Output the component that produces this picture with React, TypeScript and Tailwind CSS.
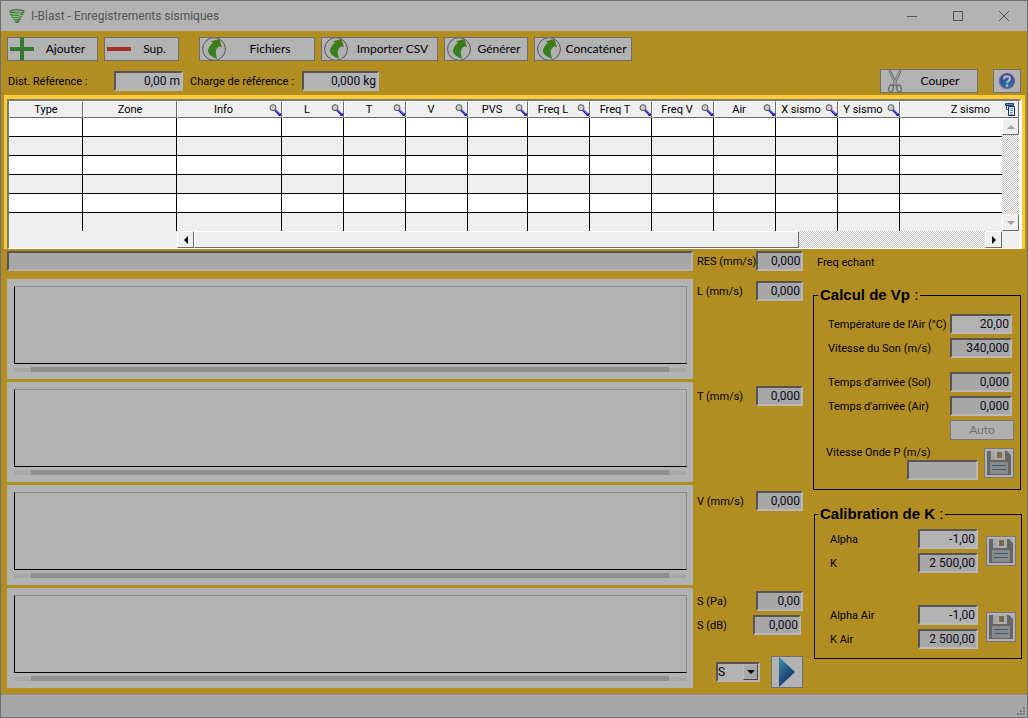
import { clsx } from "clsx";

const columns = [
    { name: "Type", width: "w-[74px]", search: false },
    { name: "Zone", width: "w-[94px]", search: false },
    { name: "Info", width: "w-[105px]", search: true },
    { name: "L", width: "w-[62px]", search: true },
    { name: "T", width: "w-[62px]", search: true },
    { name: "V", width: "w-[62px]", search: true },
    { name: "PVS", width: "w-[60px]", search: true },
    { name: "Freq L", width: "w-[62px]", search: true },
    { name: "Freq T", width: "w-[62px]", search: true },
    { name: "Freq V", width: "w-[62px]", search: true },
    { name: "Air", width: "w-[62px]", search: true },
    { name: "X sismo", width: "w-[62px]", search: true },
    { name: "Y sismo", width: "w-[62px]", search: true },
];

const bevel = "border border-t-white border-l-white border-r-[#6d6d6d] border-b-[#6d6d6d] bg-[#efefef]";
const dither = "bg-[conic-gradient(#c4c4c4_25%,#fff_0_50%,#c4c4c4_0_75%,#fff_0)] bg-[length:2px_2px]";

function TornadoIcon() {
    return (
        <svg viewBox="0 0 16 15" className="w-4 h-[15px]" fill="none" strokeLinecap="round">
            <path d="M1 2h14l-4 9-3 3-3-3z" fill="#8fa888" />
            <ellipse cx="8" cy="2.500" rx="7" ry="1.600" stroke="#2f6e24" strokeWidth="1.200" />
            <path d="M1.500 5.500Q8 8 14 5M3 8Q8 10 12.500 7.500M5 10.500Q8 12 11.500 10M6.500 13Q8 14 10 12.500" stroke="#2f7a26" strokeWidth="1.300" />
            <path d="M3 4.600Q8 6 12 4M4 7Q8 8.400 12 6.300M5.500 9.500Q8 10.500 11 8.700" stroke="#a9bda4" strokeWidth="0.800" />
        </svg>
    );
}

function PlusIcon() {
    return (
        <svg viewBox="0 0 24 22" className="w-6 h-[22px]">
            <path d="M10 0h4v9h10v4H14v9h-4v-9H0V9h10z" fill="#347a2b" />
        </svg>
    );
}

function MinusIcon() {
    return (
        <svg viewBox="0 0 24 22" className="w-6 h-[22px]">
            <path d="M0 9h24v4H0z" fill="#a03024" />
        </svg>
    );
}

function ArrowIcon() {
    return (
        <svg viewBox="0 0 24 22" className="w-6 h-[22px]">
            <defs>
                <linearGradient id="leaf" x1="0" y1="0" x2="0" y2="1">
                    <stop offset="0" stopColor="#447a10" />
                    <stop offset="1" stopColor="#318328" />
                </linearGradient>
            </defs>
            <circle cx="12" cy="11" r="11.400" fill="#b0b0b0" stroke="#555" strokeWidth="1" />
            <path d="M9 3.200L17.500 1 20 9.500 17.300 8.300C13.500 10.500 12.800 14.500 15.300 20.800 9.500 19 5.500 16 6 12 6.500 9 8.500 6.500 11 4.700z" fill="url(#leaf)" />
        </svg>
    );
}

function ScissorsIcon() {
    return (
        <svg viewBox="0 0 16 23" className="w-4 h-[23px]" fill="none">
            <path d="M2.500 0.500L10 16M13.500 0.500L6 16" stroke="#626262" strokeWidth="2.600" />
            <path d="M2.500 1l7 14M13 1L6.500 15" stroke="#a0a0a0" strokeWidth="1.300" />
            <ellipse cx="4" cy="18.500" rx="2.200" ry="3.500" stroke="#6a6a6a" strokeWidth="1.400" transform="rotate(15 4 18.500)" />
            <ellipse cx="12" cy="18.500" rx="2.200" ry="3.500" stroke="#6a6a6a" strokeWidth="1.400" transform="rotate(-15 12 18.500)" />
        </svg>
    );
}

function HelpIcon() {
    return (
        <svg viewBox="0 0 18 18" className="w-[18px] h-[18px]">
            <defs>
                <linearGradient id="ball" x1="0" y1="0" x2="0" y2="1">
                    <stop offset="0" stopColor="#2f4478" />
                    <stop offset="1" stopColor="#2478b4" />
                </linearGradient>
            </defs>
            <circle cx="9" cy="9" r="7.500" fill="url(#ball)" stroke="#83509a" strokeWidth="1.200" />
            <path d="M6 7.200C6 3.300 12.300 3.500 12 6.800 11.800 8.900 9.200 8.700 9 11.200" fill="none" stroke="#b4bccb" strokeWidth="2.200" />
            <circle cx="9" cy="13.600" r="1.300" fill="#b4bccb" />
        </svg>
    );
}

function SearchIcon() {
    return (
        <svg viewBox="0 0 12 12" className="w-3 h-3 shrink-0" fill="none">
            <path d="M6 6l5 5" stroke="#1010c0" strokeWidth="2.400" />
            <path d="M6.500 6l4.500 4.500" stroke="#b8c0ff" strokeWidth="0.700" />
            <circle cx="4" cy="3.700" r="3" fill="#c9c9c9" stroke="#555" />
            <path d="M11.500 9.500v2h-2" stroke="#111166" />
        </svg>
    );
}

function ColumnsIcon() {
    return (
        <svg viewBox="0 0 10 13" className="w-[10px] h-[13px] shrink-0">
            <path d="M.5.5h8v2h-8z" fill="#5f80c0" stroke="#23407e" />
            <path d="M1.500 3v3.500H3" fill="none" stroke="#23407e" />
            <path d="M3.500 3.500h6v9h-6z" fill="#e4ecfa" stroke="#1c2c6a" />
            <path d="M5 5.500h3M5 7.500h3M5 9.500h3M5 11.500h3" stroke="#6c88c8" />
        </svg>
    );
}

function SaveIcon() {
    return (
        <svg viewBox="0 0 24 24" className="w-6 h-6">
            <path d="M0 0h20l4 4v20H0z" fill="#666" />
            <path d="M4 0h14v9H4z" fill="#a6a6a6" />
            <path d="M8 0h8v9H8z" fill="#aeaeae" />
            <path d="M10 1h5v6h-5z" fill="#7c6a45" />
            <path d="M3 11h18v12H3z" fill="#8a8a8a" />
            <path d="M5 14.500h14M5 18.500h14" stroke="#355f80" />
        </svg>
    );
}

function ToolButton({ label, width, icon }: { label: string; width: string; icon: React.ReactNode }) {
    return (
        <button type="button" className={clsx("h-6 flex items-center border border-[#6f6f6f] bg-[#b2b2b2] pl-0.5 font-['Comic_Sans_MS',Lato,sans-serif] text-xs", width)}>
            {icon}
            <span className="flex-1 text-center whitespace-nowrap">{label}</span>
        </button>
    );
}

function NumberInput({ id, value, width, locked }: { id: string; value: string; width: string; locked?: boolean }) {
    return (
        <input
            id={id}
            type="text"
            defaultValue={value}
            readOnly={locked}
            className={clsx(
                "h-5 shrink-0 border-2 border-t-[#555] border-l-[#555] border-r-[#b8b8b8] border-b-[#b8b8b8] pr-px text-right text-xs text-[#0b0b1c] outline-none",
                width,
                locked ? "bg-[#a7a7a7]" : "bg-[#b2b2b2]"
            )}
        />
    );
}

function Field({ id, label, value, width, locked }: { id: string; label: string; value: string; width: string; locked?: boolean }) {
    return (
        <div className="flex items-center justify-between h-5">
            <label htmlFor={id} className="whitespace-nowrap">{label}</label>
            <NumberInput id={id} value={value} width={width} locked={locked} />
        </div>
    );
}

function SaveButton({ label }: { label: string }) {
    return (
        <button type="button" aria-label={label} className="size-[30px] shrink-0 flex items-center justify-center border border-[#777] bg-[#b0b0b0]">
            <SaveIcon />
        </button>
    );
}

function Chart() {
    return (
        <div className="h-[100px] bg-[#b2b2b2] pt-[7px] pl-[7px] pr-1.5">
            <div className="h-[78px] border border-l-black border-b-black border-t-[#8c8c8c] border-r-[#8c8c8c]" />
            <div className="mt-[3px] h-[5px] flex items-end pr-px">
                <div className="w-[17px] h-1 bg-[#a7a7a7]" />
                <div className="flex-1 h-[5px] bg-[#8e8e8e]" />
                <div className="w-[17px] h-1 bg-[#a7a7a7]" />
            </div>
        </div>
    );
}

function ScrollArrow({ label, path, off }: { label: string; path: string; off?: boolean }) {
    return (
        <button type="button" aria-label={label} className={clsx("size-[17px] shrink-0 flex items-center justify-center", bevel)}>
            <svg viewBox="0 0 8 8" className="size-2">
                <path d={path} fill={off ? "#a0a0a0" : "#000"} />
            </svg>
        </button>
    );
}

function RecordTable() {
    return (
        <div className="ml-[3px] mr-0.5 mt-0.5 border-[3px] border-b-0 border-[#ffcc33] border-t-4 bg-[#efefef]">
            <div className="border-l-2 border-t-2 border-r-[3px] border-b border-l-[#7a7a7a] border-t-[#7a7a7a] border-r-white border-b-white">
                <div className="flex">
                    <table className="flex-1 w-full table-fixed border-separate border-spacing-0">
                        <thead>
                            <tr>
                                {columns.map((c) => (
                                    <th key={c.name} className={clsx("h-[17px] p-0 font-normal border border-l-white border-t-white border-r-[#6d6d6d] border-b-[#6d6d6d] bg-[#efefef]", c.width)}>
                                        <div className="flex items-center h-[15px]">
                                            <span className="flex-1 whitespace-nowrap text-center">{c.name}</span>
                                            {c.search && <SearchIcon />}
                                        </div>
                                    </th>
                                ))}
                                <th className="h-[17px] p-0 pr-3 font-normal text-right border-t border-l border-b border-t-white border-l-white border-b-[#6d6d6d] bg-[#efefef]">Z sismo</th>
                            </tr>
                        </thead>
                        <tbody>
                            {[0, 1, 2, 3, 4, 5].map((row) => (
                                <tr key={row} className="bg-white even:bg-[#efefef]">
                                    {columns.map((c) => (
                                        <td key={c.name} className={clsx("p-0 border-r border-black", row < 5 ? "h-[19px] border-b" : "h-[18px]")} />
                                    ))}
                                    <td className={clsx("p-0 border-black", row < 5 && "border-b")} />
                                </tr>
                            ))}
                        </tbody>
                    </table>
                    <div className={clsx("w-[17px] shrink-0 flex flex-col", dither)}>
                        <button type="button" aria-label="Colonnes" className="h-[17px] flex items-center justify-center border-b border-r border-[#6d6d6d] bg-[#efefef]">
                            <ColumnsIcon />
                        </button>
                        <ScrollArrow label="Haut" path="M0 6h8L4 2z" off />
                        <div className="flex-1" />
                        <ScrollArrow label="Bas" path="M0 2h8L4 6z" off />
                    </div>
                </div>
                <div className="flex h-[17px] pl-[168px] pr-[17px]">
                    <ScrollArrow label="Gauche" path="M6 0v8L2 4z" />
                    <div className={clsx("flex-[13]", bevel)} />
                    <div className={clsx("flex-[4]", dither)} />
                    <ScrollArrow label="Droite" path="M2 0v8l4-4z" />
                </div>
            </div>
        </div>
    );
}

function CalibrationRows({ suffix }: { suffix: string }) {
    return (
        <div className="flex items-center gap-2">
            <div className="flex-1 flex flex-col gap-1">
                <Field id={"alpha" + suffix} label={"Alpha" + suffix} value="-1,00" width="w-[60px]" />
                <Field id={"k" + suffix} label={"K" + suffix} value="2 500,00" width="w-[60px]" locked />
            </div>
            <SaveButton label={"Enregistrer K" + suffix} />
        </div>
    );
}

export default function App() {
    return (
        <div className="min-h-screen flex flex-col border border-[#6f6f6f] bg-[#b28e22] font-[Roboto,'Liberation_Sans',sans-serif] text-[11px] leading-[15px] text-black">
            <header className="h-[30px] flex items-center bg-[#b2b2b2] pl-2 text-[#555]">
                <TornadoIcon />
                <h1 className="ml-1.5 flex-1 text-xs">I-Blast - Enregistrements sismiques</h1>
                <button type="button" aria-label="Réduire" className="w-[46px] h-full flex items-center justify-center">
                    <svg viewBox="0 0 10 10" className="size-2.5"><path d="M0 5.500h10" stroke="#555" /></svg>
                </button>
                <button type="button" aria-label="Agrandir" className="w-[46px] h-full flex items-center justify-center">
                    <svg viewBox="0 0 10 10" className="size-2.5"><path d="M.5.5h9v9h-9z" fill="none" stroke="#555" /></svg>
                </button>
                <button type="button" aria-label="Fermer" className="w-[46px] h-full flex items-center justify-center">
                    <svg viewBox="0 0 10 10" className="size-2.5"><path d="M0 0l10 10M10 0L0 10" stroke="#555" /></svg>
                </button>
            </header>

            <nav className="flex gap-1.5 pt-1.5 pl-1.5">
                <ToolButton label="Ajouter" width="w-[91px]" icon={<PlusIcon />} />
                <ToolButton label="Sup." width="w-[75px] mr-3.5" icon={<MinusIcon />} />
                <ToolButton label="Fichiers" width="w-[116px]" icon={<ArrowIcon />} />
                <ToolButton label="Importer CSV" width="w-[117px]" icon={<ArrowIcon />} />
                <ToolButton label="Générer" width="w-[84px]" icon={<ArrowIcon />} />
                <ToolButton label="Concaténer" width="w-[98px]" icon={<ArrowIcon />} />
            </nav>

            <div className="mt-2 flex items-center h-6 pl-[7px] pr-1.5">
                <label htmlFor="distance" className="w-[106px]">Dist. Référence :</label>
                <NumberInput id="distance" value="0,00 m" width="w-[69px]" />
                <label htmlFor="charge" className="w-28 ml-[7px] whitespace-nowrap">Charge de référence :</label>
                <NumberInput id="charge" value="0,000 kg" width="w-[77px]" />
                <div className="ml-auto flex gap-[15px]">
                    <ToolButton label="Couper" width="w-[98px] pl-1.5" icon={<ScissorsIcon />} />
                    <button type="button" aria-label="Aide" className="w-7 h-6 flex items-center justify-center border border-[#6f6f6f] bg-[#b2b2b2]">
                        <HelpIcon />
                    </button>
                </div>
            </div>

            <RecordTable />

            <main className="flex-1 flex gap-2.5 pl-1.5 pr-[5px] pt-0.5 pb-1.5">
                <div className="flex-1 grid grid-cols-[1fr_106px] gap-x-1 gap-y-[3px] content-start">
                    <div className="h-5 mb-[5px] border-2 border-t-[#555] border-l-[#555] border-r-[#b2b2b2] border-b-[#b2b2b2] bg-[#a7a7a7]" />
                    <Field id="res" label="RES (mm/s)" value="0,000" width="w-[47px]" locked />
                    <Chart />
                    <div className="pt-0.5">
                        <Field id="l" label="L (mm/s)" value="0,000" width="w-[47px]" locked />
                    </div>
                    <Chart />
                    <div className="pt-1">
                        <Field id="t" label="T (mm/s)" value="0,000" width="w-[47px]" locked />
                    </div>
                    <Chart />
                    <div className="pt-1.5">
                        <Field id="v" label="V (mm/s)" value="0,000" width="w-[47px]" locked />
                    </div>
                    <Chart />
                    <div className="pt-[3px] flex flex-col gap-1">
                        <Field id="pa" label="S (Pa)" value="0,00" width="w-[47px]" locked />
                        <div className="pr-0.5">
                            <Field id="db" label="S (dB)" value="0,000" width="w-12" locked />
                        </div>
                        <div className="mt-auto flex items-center justify-end gap-[11px]">
                            <div className="grid w-11 h-5 border-2 border-t-[#555] border-l-[#555] border-r-[#b8b8b8] border-b-[#b8b8b8] bg-[#b2b2b2]">
                                <select aria-label="Voie" className="col-start-1 row-start-1 appearance-none outline-none text-xs">
                                    <option>S</option>
                                </select>
                                <span className="col-start-1 row-start-1 justify-self-end pointer-events-none flex items-center justify-center w-[15px] h-4 border border-t-[#b8b8b8] border-l-[#b8b8b8] border-r-[#444] border-b-[#444] bg-[#a7a7a7]">
                                    <svg viewBox="0 0 8 4" className="w-2 h-1"><path d="M0 0h8L4 4z" /></svg>
                                </span>
                            </div>
                            <button type="button" aria-label="Suivant" className="size-8 shrink-0 flex items-center justify-center border border-[#6f6f6f] bg-[#b2b2b2]">
                                <svg viewBox="0 0 16 30" className="w-4 h-[30px]">
                                    <defs>
                                        <linearGradient id="play" x1="0" y1="0" x2="0.600" y2="1">
                                            <stop offset="0.150" stopColor="#35829c" />
                                            <stop offset="0.800" stopColor="#173f78" />
                                        </linearGradient>
                                    </defs>
                                    <path d="M0 0l16 15L0 30z" fill="url(#play)" />
                                </svg>
                            </button>
                        </div>
                    </div>
                </div>

                <aside className="w-[209px] shrink-0">
                    <p className="h-6 pl-1 leading-6">Freq echant</p>
                    <fieldset className="mt-[11px] mr-px border border-black pl-3 pr-1.5 pb-[9px]">
                        <legend className="-ml-2 px-0.5 font-['Liberation_Sans',sans-serif] text-[15px] leading-[18px] font-bold">Calcul de Vp <span className="font-normal">:</span></legend>
                        <div className="mt-2.5 pl-0.5 pr-0.5 flex flex-col gap-1">
                            <Field id="temperature" label="Température de l'Air (°C)" value="20,00" width="w-[62px]" />
                            <Field id="son" label="Vitesse du Son (m/s)" value="340,000" width="w-[62px]" locked />
                            <div className="mt-2.5">
                                <Field id="sol" label="Temps d'arrivée (Sol)" value="0,000" width="w-[62px]" locked />
                            </div>
                            <Field id="air" label="Temps d'arrivée (Air)" value="0,000" width="w-[62px]" locked />
                        </div>
                        <button type="button" disabled className="mt-1 ml-auto block w-16 h-5 border border-[#777] bg-[#b0b0b0] font-['Comic_Sans_MS',Lato,sans-serif] text-xs text-[#707070]">Auto</button>
                        <div className="mt-[5px] flex items-end gap-1.5">
                            <div className="flex-1 flex flex-col">
                                <label htmlFor="onde" className="whitespace-nowrap">Vitesse Onde P (m/s)</label>
                                <div className="self-end flex">
                                    <NumberInput id="onde" value="" width="w-[71px]" locked />
                                </div>
                            </div>
                            <div className="pb-0.5">
                                <SaveButton label="Enregistrer Vp" />
                            </div>
                        </div>
                    </fieldset>
                    <fieldset className="mt-[15px] ml-px border border-black pl-[15px] pr-[5px] pb-[9px]">
                        <legend className="-ml-3 px-0.5 font-['Liberation_Sans',sans-serif] text-[15px] leading-[18px] font-bold">Calibration de K <span className="font-normal">:</span></legend>
                        <div className="mt-1.5 flex flex-col gap-8">
                            <CalibrationRows suffix="" />
                            <CalibrationRows suffix=" Air" />
                        </div>
                    </fieldset>
                </aside>
            </main>

            <footer className="h-[23px] flex items-end justify-end border-t border-[#8e8e8e] bg-[#a7a7a7] pr-0.5 pb-0.5">
                <svg viewBox="0 0 8 8" className="size-2" fill="#7a7a7a">
                    <path d="M6 0h2v2H6zM3 3h2v2H3zM6 3h2v2H6zM0 6h2v2H0zM3 6h2v2H3zM6 6h2v2H6z" />
                </svg>
            </footer>
        </div>
    );
}
